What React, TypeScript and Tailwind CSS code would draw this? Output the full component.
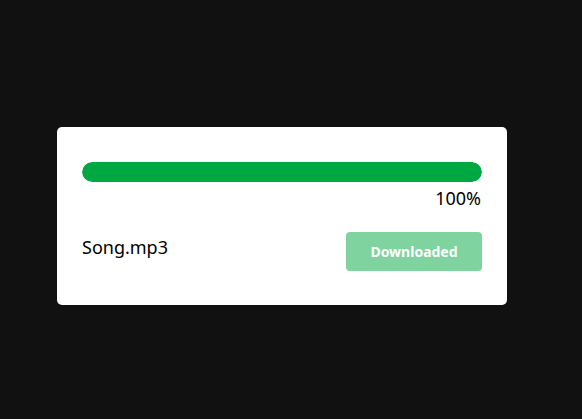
import React from 'react';

const App: React.FC = () => {
  const progress = 100;
  return (
    <div className="min-h-[419px] w-full bg-[#111111] pt-[127px] pl-[57px]" style={{ fontFamily: '"Noto Sans", "Open Sans", sans-serif' }}>
      <div className="w-[450px] h-[178px] bg-white rounded-[5px] px-[25px] pt-[35px]">
        {/* Progress bar */}
        <div className="h-5 w-full rounded-full bg-gray-200 overflow-hidden">
          <div className="h-full rounded-full bg-[#00a841]" style={{ width: `${progress}%` }}></div>
        </div>
        <div className="text-right text-[18px] leading-[24px] text-black mt-[4px] pr-[1px]">{progress}%</div>

        <div className="flex items-start justify-between mt-[22px]">
          <span className="text-[18px] leading-[24px] text-black pt-[3px]">Song.mp3</span>
          <button className="w-[136px] h-[39px] rounded-[4px] bg-[#00a841] opacity-50 text-white font-bold text-[14px]">
            Downloaded
          </button>
        </div>
      </div>
    </div>
  );
};

export default App;
